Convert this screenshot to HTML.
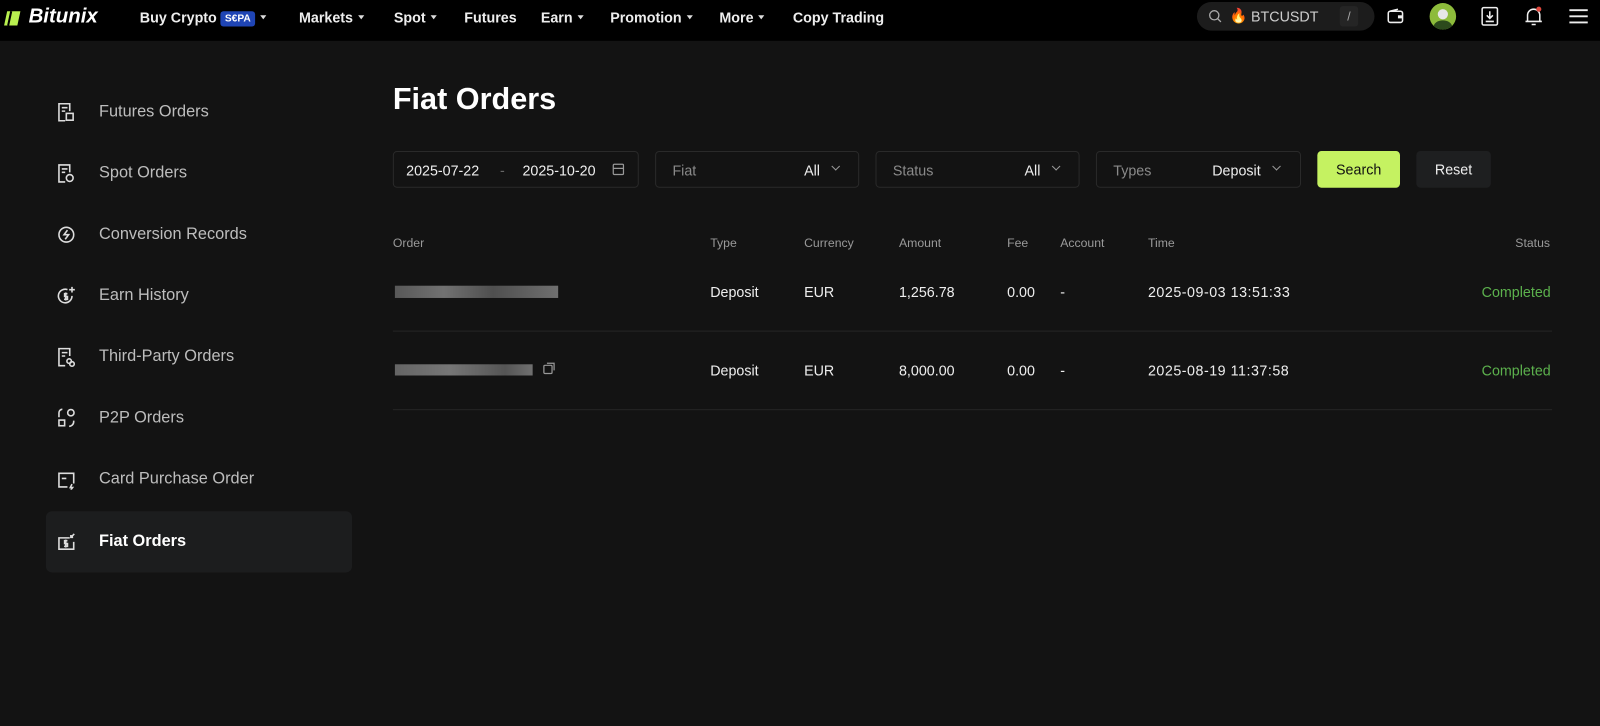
<!DOCTYPE html>
<html><head><meta charset="utf-8"><style>
*{margin:0;padding:0;box-sizing:border-box}
body{width:1600px;height:725px;background:#131313;font-family:"Liberation Sans",sans-serif;color:#fff;position:relative;overflow:hidden}
#w{position:absolute;left:0;top:0;width:1568px;height:711px;transform:scale(1.020408);transform-origin:0 0}
.nav{position:absolute;left:0;top:0;width:1568px;height:40px;background:#000}
.nav .it{position:absolute;top:9px;font-size:14px;font-weight:bold;color:#eee}
.tri{display:inline-block;width:0;height:0;border-left:3.5px solid transparent;border-right:3.5px solid transparent;border-top:4px solid #ddd;margin-left:5px;vertical-align:3px}
.side .row{position:absolute;left:45px;width:300px;height:60px}
.side .row span{position:absolute;left:52px;top:21px;font-size:16px;color:#bdbdbd}
.side svg{position:absolute;left:11px;top:20px}
.box{position:absolute;top:148px;height:36px;border:1px solid #2a2a2a;border-radius:4px;font-size:14px}
.box .l{position:absolute;left:16px;top:10px;color:#8a8a8a}
.box .r{position:absolute;top:10px;color:#eee}
.chev{position:absolute;top:11px;width:6px;height:6px;border-right:1px solid #999;border-bottom:1px solid #999;transform:rotate(45deg)}
.th{position:absolute;top:231px;font-size:12px;color:#9a9a9a}
.td{position:absolute;font-size:14px;color:#eee}
.ok{color:#5cb14d}
</style></head><body><div id="w">
<div class="nav">
<svg style="position:absolute;left:3px;top:9px" width="20" height="18" viewBox="0 0 20 18"><path d="M4 2h13l-3 14H1z" fill="#b9f04f"/><path d="M8 2l-3 14" stroke="#000" stroke-width="2"/></svg>
<div style="position:absolute;left:28px;top:5px;font-size:20px;font-weight:bold;font-style:italic;color:#fff">Bitunix</div>
<div class="it" style="left:137px">Buy Crypto <span style="background:#1f45b5;color:#fff;font-size:10px;padding:2px 4px;border-radius:3px;vertical-align:1px">S€PA</span><span class="tri"></span></div>
<div class="it" style="left:293px">Markets<span class="tri"></span></div>
<div class="it" style="left:386px">Spot<span class="tri"></span></div>
<div class="it" style="left:455px">Futures</div>
<div class="it" style="left:530px">Earn<span class="tri"></span></div>
<div class="it" style="left:598px">Promotion<span class="tri"></span></div>
<div class="it" style="left:705px">More<span class="tri"></span></div>
<div class="it" style="left:777px">Copy Trading</div>
<div style="position:absolute;left:1173px;top:2px;width:174px;height:28px;background:#1c1c1c;border-radius:14px"></div>
<svg style="position:absolute;left:1184px;top:9px" width="14" height="14"><circle cx="6" cy="6" r="4.5" stroke="#aaa" fill="none" stroke-width="1.3"/><path d="M9.5 9.5l3 3" stroke="#aaa" stroke-width="1.3"/></svg>
<div style="position:absolute;left:1205px;top:7px;font-size:14px">🔥</div>
<div style="position:absolute;left:1226px;top:8px;font-size:14px;color:#ccc">BTCUSDT</div>
<div style="position:absolute;left:1313px;top:6px;width:18px;height:20px;background:#252525;border-radius:3px;color:#aaa;font-size:12px;text-align:center;line-height:20px">/</div>
<svg style="position:absolute;left:1359px;top:8px" width="18" height="16"><rect x="1.5" y="3" width="14" height="11" rx="2" stroke="#eee" fill="none" stroke-width="1.5"/><path d="M3 3l8-2" stroke="#eee" stroke-width="1.5"/><rect x="11" y="7" width="4" height="3" fill="#eee"/></svg>
<div style="position:absolute;left:1401px;top:3px;width:26px;height:26px;border-radius:50%;background:#8dbb3b;overflow:hidden"><div style="position:absolute;left:4px;top:17px;width:18px;height:12px;border-radius:50%;background:#2c4a1c"></div><div style="position:absolute;left:8px;top:6px;width:10px;height:10px;border-radius:50%;background:#e7e7e7"></div></div>
<svg style="position:absolute;left:1451px;top:6px" width="18" height="20"><rect x="1.5" y="1.5" width="15" height="17" rx="1.5" stroke="#eee" fill="none" stroke-width="1.5"/><path d="M9 5v7M6 9l3 3 3-3M5 15h8" stroke="#eee" stroke-width="1.5" fill="none"/></svg>
<svg style="position:absolute;left:1493px;top:5px" width="20" height="22"><path d="M4 16V10a6 6 0 0112 0v6M2 16h16M8 19h4" stroke="#eee" stroke-width="1.5" fill="none"/><circle cx="15" cy="4" r="2.5" fill="#e0483e"/></svg>
<svg style="position:absolute;left:1537px;top:8px" width="20" height="16"><path d="M1 2h18M1 8h18M1 14h18" stroke="#eee" stroke-width="1.8"/></svg>
</div>

<div class="side">
<div class="row" style="top:80px"><svg width="18" height="20" viewBox="0 0 16 18" fill="none" stroke="#ddd" stroke-width="1.4"><path d="M11 8V1.5H1.5v15H7"/><path d="M4 5h5M4 8h3"/><rect x="8" y="10" width="6" height="6"/></svg><span>Futures Orders</span></div>
<div class="row" style="top:140px"><svg width="18" height="20" viewBox="0 0 16 18" fill="none" stroke="#ddd" stroke-width="1.4"><path d="M11 8V1.5H1.5v15H7"/><path d="M4 5h5M4 8h3"/><circle cx="11" cy="13" r="3"/></svg><span>Spot Orders</span></div>
<div class="row" style="top:200px"><svg width="18" height="20" viewBox="0 0 16 18" fill="none" stroke="#ddd" stroke-width="1.4"><circle cx="8" cy="9" r="6.5"/><path d="M9 5l-3 4h4l-3 4"/></svg><span>Conversion Records</span></div>
<div class="row" style="top:260px"><svg width="18" height="20" viewBox="0 0 16 18" fill="none" stroke="#ddd" stroke-width="1.4"><path d="M13 9a6 6 0 11-4-5.6"/><path d="M13 1v5M10.5 3.5h5M9 7H6.5v2.5H9V12H6M7.5 6v7"/></svg><span>Earn History</span></div>
<div class="row" style="top:320px"><svg width="18" height="20" viewBox="0 0 16 18" fill="none" stroke="#ddd" stroke-width="1.4"><path d="M11 8V1.5H1.5v15H7"/><path d="M4 5h5M4 8h3"/><circle cx="10.5" cy="12.5" r="2"/><circle cx="13" cy="15" r="2"/></svg><span>Third-Party Orders</span></div>
<div class="row" style="top:380px"><svg width="18" height="20" viewBox="0 0 16 18" fill="none" stroke="#ddd" stroke-width="1.4"><path d="M1.5 8V4a3 3 0 013-3"/><circle cx="12" cy="4" r="2.8"/><rect x="1.5" y="10.5" width="5" height="5"/><path d="M14.5 11v1a4 4 0 01-4 4"/></svg><span>P2P Orders</span></div>
<div class="row" style="top:440px"><svg width="18" height="20" viewBox="0 0 16 18" fill="none" stroke="#ddd" stroke-width="1.4"><path d="M9 15.5H1.5v-12h13v9"/><path d="M4 8h4M13 13l-1.5 3h2L12 18"/></svg><span>Card Purchase Order</span></div>
<div class="row" style="top:501px;background:#1c1d1e;border-radius:6px"><svg width="18" height="20" viewBox="0 0 16 18" fill="none" stroke="#ddd" stroke-width="1.4"><path d="M11 5.5H1.5v10h13V9"/><path d="M9 8H6.5v2.5H9V13H6M7.5 7v7M15 2l-3 3M12 3v2h2"/></svg><span style="color:#fff;font-weight:bold">Fiat Orders</span></div>
</div>

<div style="position:absolute;left:385px;top:81px;font-size:30px;font-weight:bold">Fiat Orders</div>

<div class="box" style="left:385px;width:241px"><span class="r" style="left:12px">2025-07-22</span><span style="position:absolute;left:104px;top:10px;color:#666">-</span><span class="r" style="left:126px">2025-10-20</span><svg style="position:absolute;left:214px;top:11px" width="12" height="12" fill="none" stroke="#999" stroke-width="1.2"><rect x="1" y="1" width="10" height="10" rx="1"/><path d="M1 5h10"/></svg></div>
<div class="box" style="left:642px;width:200px"><span class="l">Fiat</span><span class="r" style="left:145px">All</span><span class="chev" style="left:173px"></span></div>
<div class="box" style="left:858px;width:200px"><span class="l">Status</span><span class="r" style="left:145px">All</span><span class="chev" style="left:173px"></span></div>
<div class="box" style="left:1074px;width:201px"><span class="l">Types</span><span class="r" style="left:113px">Deposit</span><span class="chev" style="left:173px"></span></div>
<div style="position:absolute;left:1291px;top:148px;width:81px;height:36px;background:#c5f261;border-radius:4px;color:#111;font-size:14px;text-align:center;line-height:36px">Search</div>
<div style="position:absolute;left:1388px;top:148px;width:73px;height:36px;background:#1e1f20;border-radius:4px;color:#eee;font-size:14px;text-align:center;line-height:36px">Reset</div>

<div class="th" style="left:385px">Order</div><div class="th" style="left:696px">Type</div><div class="th" style="left:788px">Currency</div><div class="th" style="left:881px">Amount</div><div class="th" style="left:987px">Fee</div><div class="th" style="left:1039px">Account</div><div class="th" style="left:1125px">Time</div><div class="th" style="left:1485px">Status</div>

<div style="position:absolute;left:387px;top:280px;width:160px;height:12px;background:linear-gradient(90deg,#6a6a6a,#8a8a8a 30%,#5f5f5f 60%,#888);opacity:.8"></div>
<div class="td" style="top:278px;left:696px">Deposit</div><div class="td" style="top:278px;left:788px">EUR</div><div class="td" style="top:278px;left:881px">1,256.78</div><div class="td" style="top:278px;left:987px">0.00</div><div class="td" style="top:278px;left:1039px">-</div><div class="td" style="top:278px;left:1125px;letter-spacing:.5px">2025-09-03 13:51:33</div><div class="td ok" style="top:278px;left:1452px">Completed</div>
<div style="position:absolute;left:385px;top:324px;width:1136px;height:1px;background:#262626"></div>
<div style="position:absolute;left:387px;top:357px;width:135px;height:11px;background:linear-gradient(90deg,#7a7a7a,#909090 40%,#666 80%,#888);opacity:.8"></div>
<svg style="position:absolute;left:532px;top:355px" width="12" height="12" fill="none" stroke="#999" stroke-width="1.2"><rect x="1" y="3" width="8" height="8" rx="1"/><path d="M4 1h7v7"/></svg>
<div class="td" style="top:355px;left:696px">Deposit</div><div class="td" style="top:355px;left:788px">EUR</div><div class="td" style="top:355px;left:881px">8,000.00</div><div class="td" style="top:355px;left:987px">0.00</div><div class="td" style="top:355px;left:1039px">-</div><div class="td" style="top:355px;left:1125px;letter-spacing:.5px">2025-08-19 11:37:58</div><div class="td ok" style="top:355px;left:1452px">Completed</div>
<div style="position:absolute;left:385px;top:401px;width:1136px;height:1px;background:#262626"></div>
</div></body></html>
